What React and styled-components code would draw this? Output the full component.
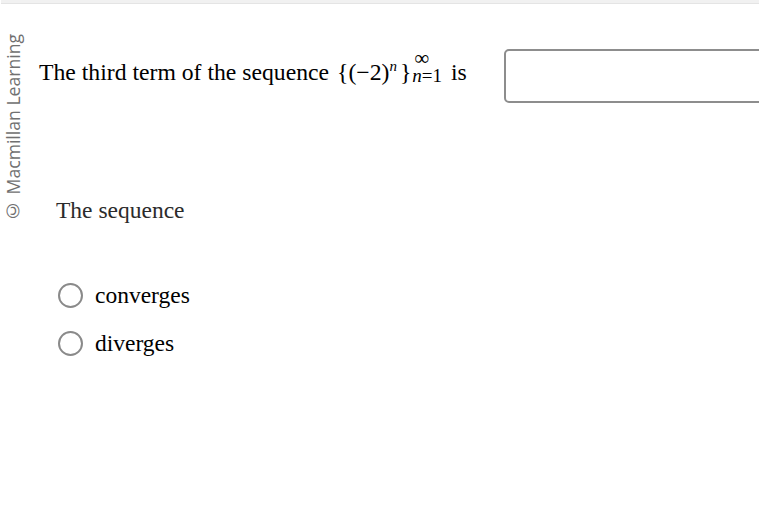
import React from 'react';
import styled, { createGlobalStyle } from 'styled-components';

const GlobalStyle = createGlobalStyle`
  html, body {
    margin: 0;
    padding: 0;
    background: #ffffff;
  }
  body {
    font-family: "Liberation Serif", "Times New Roman", serif;
    color: #000000;
  }
`;

const App = () => {
  return (
    <Page>
      <GlobalStyle />
      <TopBar />
      <Body>
        <Sidebar>
          <Credit>© Macmillan Learning</Credit>
        </Sidebar>
        <Content>
          <QuestionRow>
            <Prompt>
              The third term of the sequence
              <Math>
                {'{'}(−2)<Sup>n</Sup>
                <Brace>{'}'}</Brace>
                <Limits>
                  <Upper>∞</Upper>
                  <Lower>
                    <i>n</i>=1
                  </Lower>
                </Limits>
              </Math>
              <Tail>is</Tail>
            </Prompt>
            <AnswerBox type="text" />
          </QuestionRow>

          <Part>
            <PartLabel>The sequence</PartLabel>
            <Choices>
              <Choice>
                <Radio />
                <ChoiceText>converges</ChoiceText>
              </Choice>
              <Choice>
                <Radio />
                <ChoiceText>diverges</ChoiceText>
              </Choice>
            </Choices>
          </Part>
        </Content>
      </Body>
    </Page>
  );
};

export default App;

const Page = styled.div`
  width: 759px;
  height: 524px;
  overflow: hidden;
  background: #ffffff;
`;

const TopBar = styled.div`
  height: 3px;
  background: #f1f1f1;
  border-bottom: 1px solid #e4e4e4;
  margin-left: 1px;
`;

const Body = styled.div`
  display: flex;
`;

const Sidebar = styled.div`
  width: 39px;
  flex-shrink: 0;
  padding: 30px 0 0 4px;
  box-sizing: border-box;
`;

const Credit = styled.div`
  writing-mode: vertical-rl;
  transform: rotate(180deg);
  font-family: "Open Sans", "Liberation Sans", sans-serif;
  font-size: 17.6px;
  line-height: 19px;
  color: #707070;
  white-space: nowrap;
`;

const Content = styled.div`
  flex: 1;
  min-width: 0;
`;

const QuestionRow = styled.div`
  display: flex;
  align-items: flex-start;
  margin-top: 45px;
  white-space: nowrap;
`;

const Prompt = styled.div`
  font-size: 23.7px;
  line-height: 28px;
  color: #000000;
`;

const Math = styled.span`
  margin-left: 8px;
  white-space: nowrap;
`;

const Sup = styled.sup`
  font-style: italic;
  font-size: 15px;
  vertical-align: 9px;
  line-height: 0;
`;

const Brace = styled.span`
  margin-left: 3px;
`;

/* stacked upper/lower limits; baseline follows the lower line */
const Limits = styled.span`
  display: inline-block;
  vertical-align: -2px;
  margin-left: 1px;
`;

const Upper = styled.span`
  display: block;
  padding-left: 2px;
  font-size: 21px;
  line-height: 18px;
`;

const Lower = styled.span`
  display: block;
  font-size: 19px;
  line-height: 17px;
`;

const Tail = styled.span`
  margin-left: 9px;
`;

const AnswerBox = styled.input`
  flex-shrink: 0;
  margin-left: 37px;
  width: 280px;
  height: 54px;
  box-sizing: border-box;
  border: 2px solid #8d8d8d;
  border-radius: 5px;
  background: #ffffff;
  outline: none;
`;

const Part = styled.div`
  padding-left: 17px;
  margin-top: 93px;
`;

const PartLabel = styled.div`
  font-size: 23.5px;
  line-height: 28px;
  color: #2b2b2b;
`;

const Choices = styled.div`
  display: flex;
  flex-direction: column;
  margin-top: 47px;
`;

const Choice = styled.label`
  display: flex;
  align-items: center;
  height: 48px;
  gap: 12px;
`;

const Radio = styled.span`
  width: 25px;
  height: 25px;
  margin-left: 2px;
  box-sizing: border-box;
  border: 2.5px solid #8a8a8a;
  border-radius: 50%;
  flex-shrink: 0;
`;

const ChoiceText = styled.span`
  font-size: 23.5px;
  line-height: 28px;
  color: #000000;
`;
